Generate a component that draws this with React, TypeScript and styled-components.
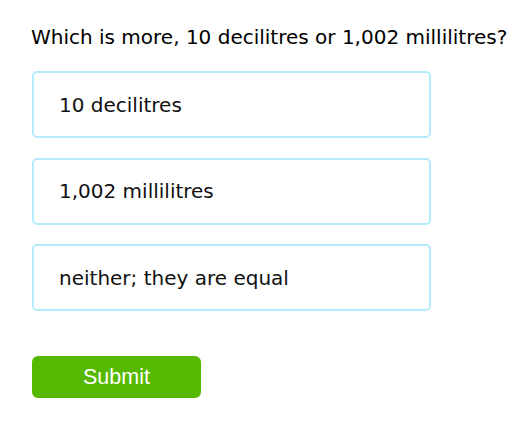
import React from "react";
import styled, { createGlobalStyle } from "styled-components";

const Global = createGlobalStyle`
  html, body { margin: 0; padding: 0; background: #ffffff; }
  body { font-family: "DejaVu Sans", Verdana, sans-serif; }
`;

const Page = styled.div`
  padding: 24px 0 0 31px;
`;

const Question = styled.div`
  font-size: 20px;
  line-height: 26px;
  color: #000;
  margin-bottom: 21px;
  white-space: nowrap;
`;

const Choices = styled.div`
  display: flex;
  flex-direction: column;
  gap: 19.5px;
  width: 399px;
  margin-left: 1px;
`;

const Choice = styled.div`
  box-sizing: border-box;
  height: 67px;
  border: 2px solid #b5eafc;
  border-radius: 5px;
  display: flex;
  align-items: center;
  padding-left: 25px;
  font-size: 20px;
  color: #111;
  background: #fff;
`;

const SubmitButton = styled.button`
  display: block;
  margin-top: 45px;
  margin-left: 1px;
  width: 169px;
  height: 42px;
  border: none;
  border-radius: 6px;
  background: #56b800;
  color: #fff;
  font-family: "Liberation Sans", Arial, sans-serif;
  font-size: 21.5px;
  cursor: pointer;
`;

const choices = ["10 decilitres", "1,002 millilitres", "neither; they are equal"];

export default function App() {
  return (
    <Page>
      <Global />
      <Question>Which is more, 10 decilitres or 1,002 millilitres?</Question>
      <Choices>
        {choices.map((c) => (
          <Choice key={c}>{c}</Choice>
        ))}
      </Choices>
      <SubmitButton>Submit</SubmitButton>
    </Page>
  );
}
